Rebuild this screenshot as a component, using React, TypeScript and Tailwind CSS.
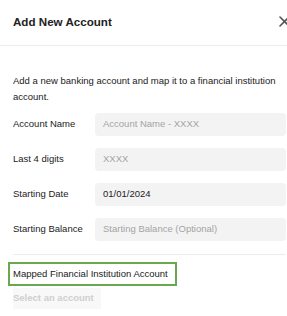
import React from "react";

const font = { fontFamily: "'Liberation Sans', Arial, sans-serif" };

function Row({ label, placeholder, value }: { label: string; placeholder?: string; value?: string }) {
  return (
    <div className="flex items-center h-[23px]">
      <div className="w-[82px] shrink-0 text-[9.5px] text-[#222] whitespace-nowrap">{label}</div>
      <div className="flex-1 h-[23px] rounded-[4px] bg-[#f4f3f4] flex items-center px-[8px] text-[9.5px] whitespace-nowrap">
        {value ? (
          <span className="text-[#222]">{value}</span>
        ) : (
          <span className="text-[#a3a3a3]">{placeholder}</span>
        )}
      </div>
    </div>
  );
}

export default function App() {
  return (
    <div className="w-[287px] h-[316px] overflow-hidden bg-white" style={font}>
      <div className="w-[299px]">
        <div className="h-[46px] border-b border-[#ececec] flex items-center justify-between pl-[13px] pr-[9px]">
          <div className="text-[11.6px] font-bold text-[#222] mt-[-2px]">Add New Account</div>
          <svg width="11" height="11" viewBox="0 0 11 11" className="mt-[-3px]">
            <path d="M1 1 L10 10 M10 1 L1 10" stroke="#555" strokeWidth="1.6" strokeLinecap="round" />
          </svg>
        </div>
        <div className="px-[13px] pt-[27px]">
          <p className="text-[9.5px] leading-[16px] text-[#1a1a1a] pr-[8px]">
            Add a new banking account and map it to a financial institution account.
          </p>
          <div className="mt-[8px] flex flex-col gap-[12px]">
            <Row label="Account Name" placeholder="Account Name - XXXX" />
            <Row label="Last 4 digits" placeholder="XXXX" />
            <Row label="Starting Date" value="01/01/2024" />
            <Row label="Starting Balance" placeholder="Starting Balance (Optional)" />
          </div>
          <div className="mt-[13px] border-t border-[#ececec]" />
          <div className="mt-[7px] -ml-[5px] w-[169px] h-[24px] border-2 border-[#6aa84f] flex items-center px-[3px] text-[9.5px] text-[#1a1a1a] whitespace-nowrap">
            Mapped Financial Institution Account
          </div>
          <div className="mt-[2px] w-[88px] h-[21px] bg-[#f8f8f8] flex items-center text-[9.5px] font-bold text-[#cfcfcf] whitespace-nowrap">
            Select an account
          </div>
        </div>
      </div>
    </div>
  );
}
